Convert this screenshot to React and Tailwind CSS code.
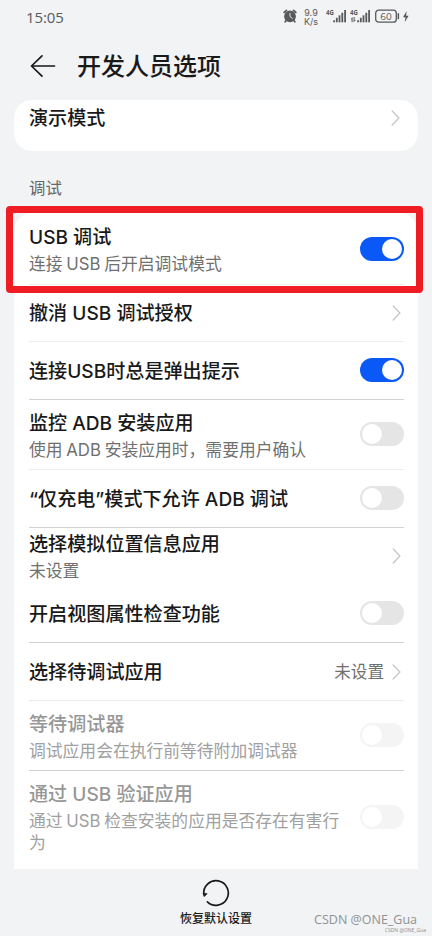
import React, { useState } from 'react';
import { clsx } from 'clsx';

const settings = [
  { id: 'usb', title: 'USB 调试', desc: '连接 USB 后开启调试模式', type: 'switch', on: true, height: 'h-[72px] pt-px', line: 'border-[#ececec]' },
  { id: 'revoke', title: '撤消 USB 调试授权', type: 'link', height: 'h-[57px]', line: 'border-[#ececec]' },
  { id: 'prompt', title: '连接USB时总是弹出提示', type: 'switch', on: true, height: 'h-[58px]', line: 'border-[#d3d3d3]' },
  { id: 'monitor', title: '监控 ADB 安装应用', desc: '使用 ADB 安装应用时，需要用户确认', type: 'switch', height: 'h-[70px]', line: 'border-[#ececec]' },
  { id: 'charge', title: '“仅充电”模式下允许 ADB 调试', type: 'switch', height: 'h-[58px]', line: 'border-[#d3d3d3]' },
  { id: 'location', title: '选择模拟位置信息应用', desc: '未设置', type: 'link', height: 'h-[57px]', line: 'border-transparent' },
  { id: 'view', title: '开启视图属性检查功能', type: 'switch', height: 'h-[58px]', line: 'border-[#d3d3d3]' },
  { id: 'app', title: '选择待调试应用', value: '未设置', type: 'link', height: 'h-[58px]', line: 'border-[#ececec]' },
  { id: 'wait', title: '等待调试器', desc: '调试应用会在执行前等待附加调试器', type: 'switch', disabled: true, height: 'h-[70px]', line: 'border-[#d3d3d3]' },
  { id: 'verify', title: '通过 USB 验证应用', desc: '通过 USB 检查安装的应用是否存在有害行为', type: 'switch', disabled: true, height: 'h-[93px]', line: 'border-transparent' },
];

const Chevron = () => (
  <svg className="mr-[3px] shrink-0" width="9" height="16" viewBox="0 0 9 16" fill="none" stroke="#c8c8ca" strokeWidth="1.4" strokeLinecap="round" strokeLinejoin="round">
    <path d="M1.2 1 7.9 8 1.2 15" />
  </svg>
);

const Toggle = ({ on, disabled, onClick }) => (
  <button
    type="button"
    onClick={onClick}
    disabled={disabled}
    className={clsx(
      'mb-px flex h-6 w-11 shrink-0 items-center rounded-full px-0.5',
      on ? 'justify-end bg-[#0a59f7]' : 'justify-start',
      !on && (disabled ? 'bg-[#f4f4f4]' : 'bg-[#e5e5e5]')
    )}
  >
    <span className="h-5 w-5 rounded-full bg-white" />
  </button>
);

const Signal = ({ data }) => (
  <svg width="21" height="14" viewBox="0 0 21 14" fill="#58595b">
    <text x="0" y="6.3" fontSize="7" fontWeight="700" textLength="7.8" lengthAdjust="spacingAndGlyphs">4G</text>
    {data && <path d="M.6 10.3 2.6 7.9v5.4H1.6v-3zM3.6 7.9h1v3h1.3l-2.3 2.4z" />}
    <rect x="7.2" y="11.3" width="1.8" height="2" />
    <rect x="9.9" y="8.8" width="1.8" height="4.5" />
    <rect x="12.6" y="6.3" width="1.8" height="7" />
    <rect x="15.4" y="3.8" width="1.8" height="9.5" />
    <rect x="18.2" y="1" width="1.8" height="12.3" />
  </svg>
);

const StatusBar = () => (
  <div className="flex h-8 items-center pl-[26px] pr-[22px] font-['Open_Sans',sans-serif] text-[#58595b]">
    <span className="grow pt-px text-[15px] leading-5 tracking-[-0.1px]">15:05</span>
    <svg className="mr-[7px]" width="14" height="14" viewBox="0 0 14 14" fill="none" stroke="#58595b" strokeLinecap="round">
      <circle cx="7" cy="7.3" r="5.9" fill="#58595b" stroke="none" />
      <path d="M1.2 3.4 3.4 1.4M12.8 3.4 10.6 1.4M3.2 11.5 2.2 12.8M10.8 11.5l1 1.3" strokeWidth="1.8" />
      <path d="M7 4.4v3.1l2.2 1.8" stroke="#f1f3f5" strokeWidth="0.9" />
    </svg>
    <div className="mr-2 flex w-[14px] flex-col items-center pt-px font-['Inter',sans-serif] text-[9px] leading-[9px]">
      <span>9.9</span>
      <span>K/s</span>
    </div>
    <Signal />
    <span className="w-[3px]" />
    <Signal data />
    <svg className="ml-1" width="35" height="14" viewBox="0 0 35 14">
      <rect x="0.7" y="1.2" width="20.6" height="12" rx="3" fill="none" stroke="#58595b" strokeWidth="1.3" />
      <rect x="22.6" y="4.2" width="1.5" height="6" fill="#58595b" />
      <text x="5.2" y="10.7" fontSize="9.6" fontWeight="500" fill="#58595b" textLength="11.5" lengthAdjust="spacingAndGlyphs">60</text>
      <path d="M31.6 2 28 8.2h2.5l-.8 5 3.9-6.4h-2.5z" fill="#58595b" />
    </svg>
  </div>
);

const SettingRow = ({ item, on, onToggle }) => (
  <div className={clsx('flex items-center border-b', item.height, item.line)}>
    <div className="min-w-0 grow">
      <div className={clsx('whitespace-nowrap pt-px text-[19.1px] font-medium leading-[27px]', item.disabled ? 'text-[#979797]' : 'text-[#191919]')}>
        {item.title}
      </div>
      {item.desc && (
        <div className={clsx('w-[318px] pt-0.5 text-[16.8px] leading-[22px] [word-spacing:-1px]', item.disabled ? 'text-[#a0a0a0]' : 'text-[#707070]')}>
          {item.desc}
        </div>
      )}
    </div>
    {item.value && <span className="mr-2 shrink-0 text-[16.6px] leading-6 text-[#707070]">{item.value}</span>}
    {item.type === 'link' ? <Chevron /> : <Toggle on={on} disabled={item.disabled} onClick={onToggle} />}
  </div>
);

const App = () => {
  const [enabled, setEnabled] = useState(() =>
    Object.fromEntries(settings.map((item) => [item.id, !!item.on]))
  );

  const toggle = (id) => setEnabled((prev) => ({ ...prev, [id]: !prev[id] }));

  return (
    <div className="relative flex h-[936px] w-[432px] flex-col overflow-hidden bg-[#f1f3f5] font-['Inter','Noto_Sans_CJK_SC',sans-serif]">
      <StatusBar />

      <header className="flex h-[68px] items-center pl-[30px]">
        <svg width="26" height="24" viewBox="0 0 26 24" fill="none" stroke="#191919" strokeWidth="1.7" strokeLinecap="round" strokeLinejoin="round">
          <path d="M24.5 12H1.5M12 1.8 1.5 12 12 22.2" />
        </svg>
        <h1 className="ml-[21px] pt-0.5 text-[24px] font-medium leading-9 text-[#191919]">开发人员选项</h1>
      </header>

      <section className="mx-3.5 h-[51px] shrink-0 rounded-[18px] bg-white px-[15px]">
        <div className="flex h-9 items-center justify-between">
          <span className="text-[19.1px] font-medium leading-[27px] text-[#191919]">演示模式</span>
          <Chevron />
        </div>
      </section>

      <h2 className="flex h-[62px] shrink-0 items-center pl-[29px] pt-3 text-[16.4px] leading-6 text-[#666]">调试</h2>

      <section className="mx-3.5 h-[656px] shrink-0 rounded-t-[18px] bg-white pl-[15px] pr-3.5">
        {settings.map((item) => (
          <SettingRow key={item.id} item={item} on={enabled[item.id]} onToggle={() => toggle(item.id)} />
        ))}
      </section>

      <footer className="flex flex-col items-center pt-[9px]">
        <svg width="30" height="30" viewBox="0 0 30 30" fill="none" stroke="#191919" strokeWidth="1.7" strokeLinecap="round">
          <path d="M2.8 16.5A12.3 12.3 0 1 1 6.4 23.8" />
          <path d="M2.2 15.2 3.2 18.6 5.8 16z" fill="#191919" strokeWidth="0.8" strokeLinejoin="round" />
        </svg>
        <span className="mt-[2px] text-[12px] font-medium leading-[18px] text-[#191919]">恢复默认设置</span>
      </footer>

      {/* highlight around the USB debugging entry */}
      <div className="pointer-events-none absolute left-[6px] top-[206px] h-[87px] w-[417px] rounded-[4px] border-[7px] border-[#ef1c24]" />

      <div className="absolute right-[6px] top-[913px] flex flex-col items-end font-['Open_Sans',sans-serif] text-[#8f9193]">
        <span className="mr-[9px] text-[12.5px] leading-[14px]">CSDN @ONE_Gua</span>
        <span className="text-[5px] leading-[6px]">CSDN @ONE_Gua</span>
      </div>
    </div>
  );
};

export default App;
